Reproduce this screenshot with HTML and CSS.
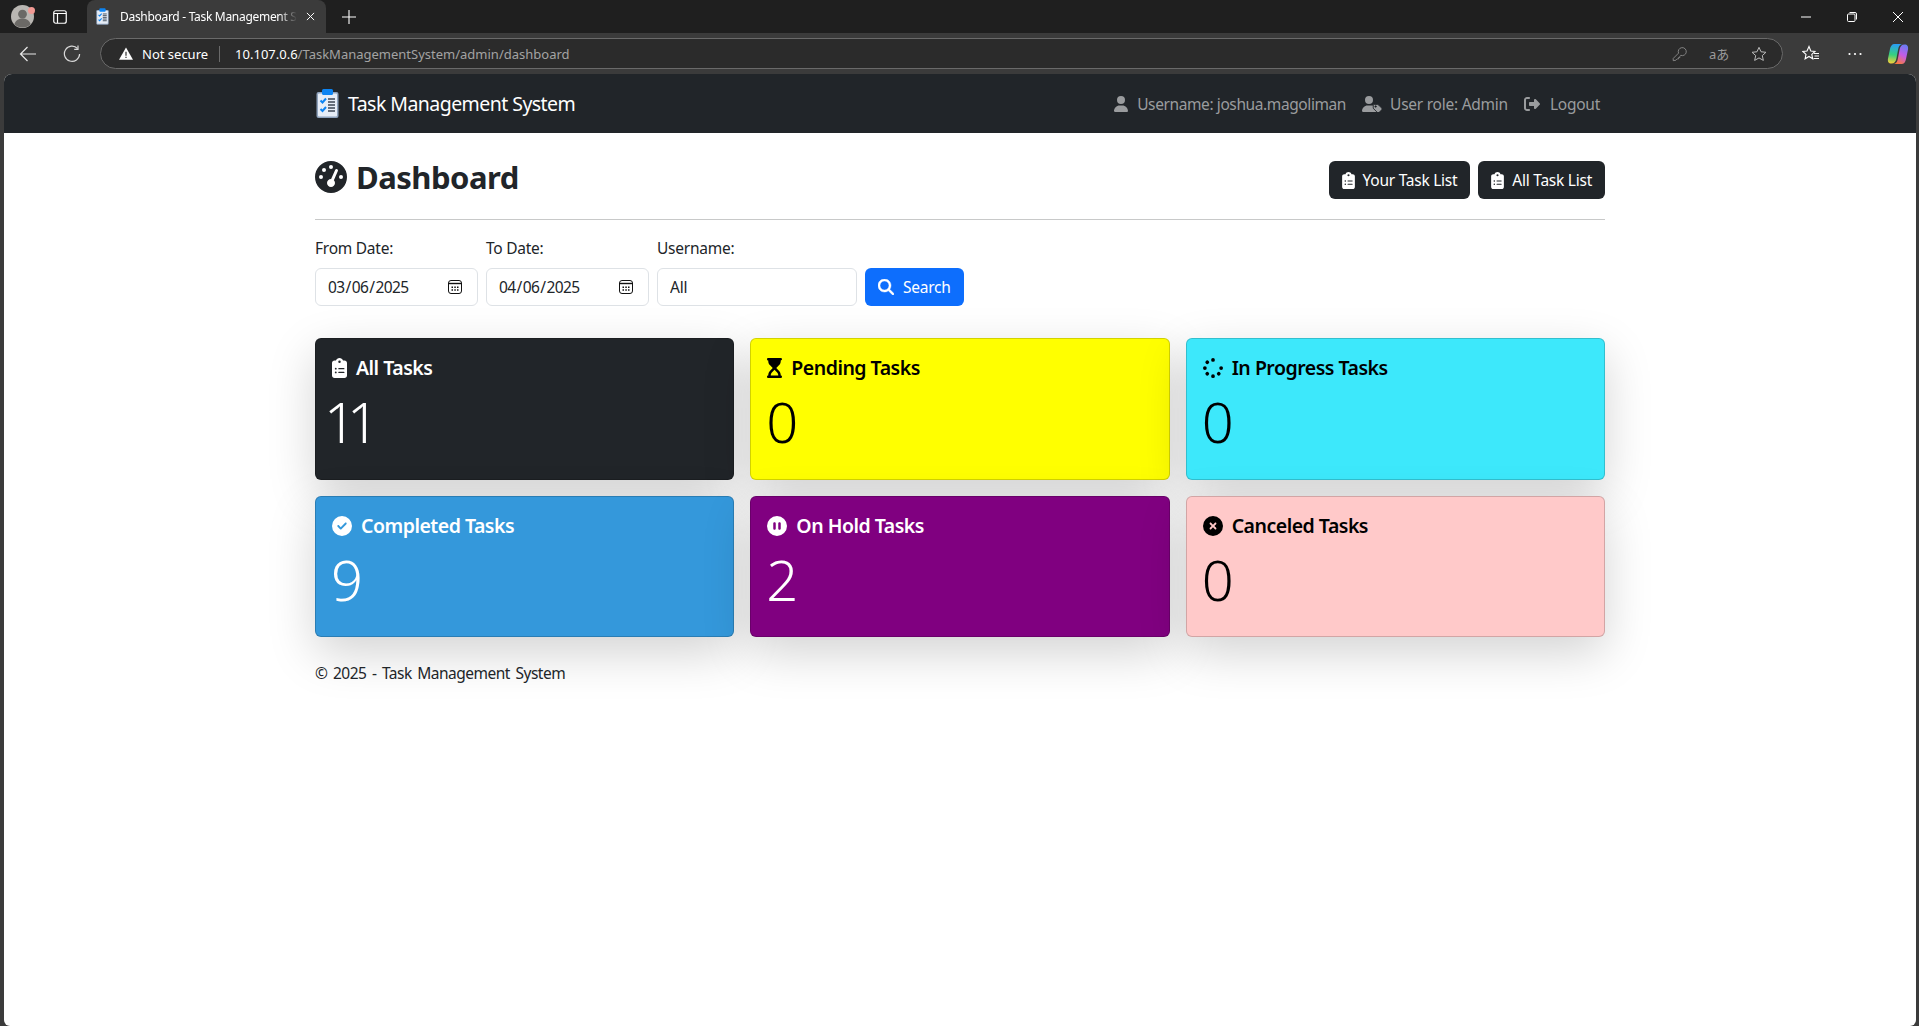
FILE: index.html
```html
<!DOCTYPE html>
<html lang="en">
  <head>
    <meta charset="UTF-8" />
    <meta name="viewport" content="width=device-width, initial-scale=1.0" />
    <title>Dashboard - Task Management System</title>
    <link rel="stylesheet" href="styles.css">
  </head>
  <body>
    <!-- Shared icons -->
    <svg class="sprite">
      <symbol id="icon-clipboard" viewBox="0 0 384 512">
        <path fill="currentColor" d="M192 0c-41.8 0-77.4 26.7-90.5 64H64C28.7 64 0 92.7 0 128V448c0 35.3 28.7 64 64 64H320c35.3 0 64-28.7 64-64V128c0-35.3-28.7-64-64-64H282.5C269.4 26.7 233.8 0 192 0zm0 64a32 32 0 1 1 0 64 32 32 0 1 1 0-64zM72 272a24 24 0 1 1 48 0 24 24 0 1 1 -48 0zm104-16H304c8.8 0 16 7.2 16 16s-7.2 16-16 16H176c-8.8 0-16-7.2-16-16s7.2-16 16-16zM72 368a24 24 0 1 1 48 0 24 24 0 1 1 -48 0zm88 0c0-8.8 7.2-16 16-16H304c8.8 0 16 7.2 16 16s-7.2 16-16 16H176c-8.8 0-16-7.2-16-16z" />
      </symbol>
      <symbol id="icon-logo" viewBox="0 0 23 29">
        <rect x="0.5" y="3" width="22" height="26" rx="2" fill="#8fa3bd" />
        <rect x="2" y="4.5" width="19" height="23" rx="1" fill="#e6edf7" />
        <rect x="6" y="0" width="11" height="6" rx="1.5" fill="#0d84f2" />
        <path d="M4.5 11.5l2 2 3.5-4M4.5 20l2 2 3.5-4" fill="none" stroke="#0d84f2" stroke-width="2" />
        <path d="M12 10h7M12 13h7M12 16h7M12 19h7M12 22h7" fill="none" stroke="#3c4654" stroke-width="1.6" />
      </symbol>
      <symbol id="icon-calendar" viewBox="0 0 14 14">
        <rect x="0.5" y="0.5" width="13" height="13" rx="2.5" fill="none" stroke="#111" />
        <path d="M1 3.500h12" stroke="#111" stroke-width="1.400" />
        <path d="M3.500 6.500h1.500v1.500h-1.500zM6.300 6.500h1.500v1.500h-1.500zM9 6.500h1.500v1.500h-1.500zM3.500 9.300h1.500v1.500h-1.500zM6.300 9.300h1.500v1.500h-1.500zM9 9.300h1.500v1.500h-1.500z" fill="#111" />
      </symbol>
    </svg>

    <!-- Browser tab strip -->
    <div class="tabstrip">
      <div class="avatar">
        <svg viewBox="0 0 24 24">
          <circle cx="12" cy="12" r="12" fill="#b9b6b2" />
          <circle cx="12" cy="9.5" r="4.6" fill="#6b6966" />
          <path d="M3.5 20c1.5-4.5 5-6 8.5-6s7 1.500 8.500 6a12 12 0 0 1-17 0z" fill="#6b6966" />
        </svg>
        <span class="avatar-dot"></span>
      </div>
      <svg class="strip-icon" viewBox="0 0 14 14">
        <rect x="0.75" y="0.75" width="12.5" height="12.5" rx="2" fill="none" stroke="#fff" stroke-width="1.2" />
        <path d="M1 3.500h12M4.500 3.500v9.500" fill="none" stroke="#fff" stroke-width="1.2" />
      </svg>
      <div class="tab">
        <svg class="tab-logo"><use href="#icon-logo" /></svg>
        <span class="tab-title">Dashboard - Task Management System</span>
        <svg class="tab-close" viewBox="0 0 10 10">
          <path d="M1 1l8 8M9 1l-8 8" stroke="#fff" stroke-width="1.1" />
        </svg>
      </div>
      <svg class="tab-new" viewBox="0 0 14 14">
        <path d="M7 0v14M0 7h14" stroke="#fff" stroke-width="1.1" />
      </svg>
      <div class="window-controls">
        <svg viewBox="0 0 10 10"><path d="M0 5h10" stroke="#fff" stroke-width="1" /></svg>
        <svg viewBox="0 0 10 10">
          <rect x="0.500" y="2" width="7.500" height="7.500" rx="1" fill="none" stroke="#fff" />
          <path d="M2.500 0.500h5.500a1.500 1.500 0 0 1 1.500 1.500v5.500" fill="none" stroke="#fff" />
        </svg>
        <svg viewBox="0 0 10 10"><path d="M0 0l10 10M10 0l-10 10" stroke="#fff" stroke-width="1" /></svg>
      </div>
    </div>

    <!-- Browser toolbar -->
    <div class="toolbar">
      <div class="tool-btn">
        <svg class="tool-icon" viewBox="0 0 18 18">
          <path d="M17 9H1.500M8.500 2L1.500 9l7 7" fill="none" stroke="#e8e8e8" stroke-width="1.2" />
        </svg>
      </div>
      <div class="tool-btn">
        <svg class="tool-icon" viewBox="0 0 18 18">
          <path d="M14.500 3.500A7.600 7.600 0 1 0 16.600 9" fill="none" stroke="#d8d8d8" stroke-width="1.2" />
          <path d="M15 0.500v3.800h-3.800" fill="none" stroke="#d8d8d8" stroke-width="1.2" />
        </svg>
      </div>
      <div class="address">
        <svg class="warn-icon" viewBox="0 0 16 14">
          <path d="M8 0L16 14H0z" fill="#fff" />
          <path d="M8 5v4.500M8 10.800v1.400" stroke="#333" stroke-width="1.400" />
        </svg>
        <span class="not-secure">Not secure</span>
        <span class="address-sep"></span>
        <span class="url"><span class="url-host">10.107.0.6</span>/TaskManagementSystem/admin/dashboard</span>
        <div class="address-actions">
          <div class="addr-btn">
            <svg viewBox="0 0 16 18">
              <path d="M1.500 16.500v-2.500l6-6a4.500 4.500 0 1 1 2.500 2.500l-1 1v1.500h-1.500v1.500h-1.500l-1.500 1.500z" fill="none" stroke="#8d8d8d" stroke-width="1" />
            </svg>
          </div>
          <div class="addr-btn"><span class="translate">aあ</span></div>
          <div class="addr-btn">
            <svg viewBox="0 0 18 18">
              <path d="M9 1.500l2.300 5 5.500 0.600-4.100 3.700 1.200 5.400L9 13.400l-4.900 2.800 1.200-5.400L1.200 7.100l5.500-0.600z" fill="none" stroke="#bdbdbd" stroke-width="1.100" />
            </svg>
          </div>
        </div>
      </div>
      <div class="tool-btn">
        <svg class="tool-icon" viewBox="0 0 18 18">
          <path d="M7 1.500l1.800 4.500 4.200 0.400-3.200 3 0.900 4.400L7 11.500l-3.900 2.300 0.900-4.400-3.200-3 4.200-0.400z" fill="none" stroke="#fff" stroke-width="1.100" />
          <path d="M12 8.500h5M12.500 11h4.500M11.500 13.500h5.500" stroke="#fff" stroke-width="1" />
        </svg>
      </div>
      <div class="tool-btn">
        <svg class="tool-icon" viewBox="0 0 18 18">
          <circle cx="3.500" cy="9" r="1.100" fill="#fff" />
          <circle cx="9" cy="9" r="1.100" fill="#fff" />
          <circle cx="14.500" cy="9" r="1.100" fill="#fff" />
        </svg>
      </div>
      <div class="tool-btn copilot-btn">
        <svg class="copilot" viewBox="0 0 22 22">
          <defs>
            <linearGradient id="cop-left" x1="0.400" y1="0" x2="0.300" y2="1">
              <stop offset="0" stop-color="#2a9df4" />
              <stop offset="0.550" stop-color="#35d07f" />
              <stop offset="1" stop-color="#f7d038" />
            </linearGradient>
            <linearGradient id="cop-right" x1="0.700" y1="0" x2="0.300" y2="1">
              <stop offset="0" stop-color="#6a7cf5" />
              <stop offset="0.500" stop-color="#c45be6" />
              <stop offset="1" stop-color="#fb7a3c" />
            </linearGradient>
          </defs>
          <path d="M7.500 1H15C12.500 1.500 11.500 4 11 7L9.500 15C9 18.500 7.500 20.500 4.500 20.500C1.500 20.500 .5 18.500 1 15.500L3 6C3.500 3 5 1 7.500 1z" fill="url(#cop-left)" />
          <path d="M14.500 21H7C9.500 20.500 10.500 18 11 15L12.500 7C13 3.500 14.500 1.500 17.500 1.500C20.500 1.500 21.500 3.500 21 6.500L19 16C18.500 19 17 21 14.500 21z" fill="url(#cop-right)" />
        </svg>
      </div>
    </div>

    <div class="page">
      <!-- Top navbar -->
      <nav class="navbar">
        <div class="container navbar-inner">
          <a class="brand">
            <svg class="brand-logo"><use href="#icon-logo" /></svg>
            <span>Task Management System</span>
          </a>
          <div class="nav-links">
            <a class="nav-link nav-user">
              <svg class="nav-icon" viewBox="0 0 448 512"><path fill="currentColor" d="M224 256A128 128 0 1 0 224 0a128 128 0 1 0 0 256zm-45.700 48C79.800 304 0 383.800 0 482.300C0 498.700 13.300 512 29.700 512H418.300c16.400 0 29.700-13.300 29.700-29.700C448 383.800 368.200 304 269.700 304H178.300z" /></svg>
              Username: joshua.magoliman
            </a>
            <a class="nav-link">
              <svg class="nav-icon-wide" viewBox="0 0 640 512">
                <path fill="currentColor" d="M224 256A128 128 0 1 0 224 0a128 128 0 1 0 0 256zm-45.700 48C79.800 304 0 383.800 0 482.300C0 498.700 13.300 512 29.700 512H470L350 392V304H178.300z" />
                <path fill="currentColor" fill-rule="evenodd" stroke="#212529" stroke-width="24" d="M392 272h100c14 0 26 5 36 15l100 100c15 15 15 40 0 55l-82 82c-15 15-40 15-55 0L376 409c-10-10-16-22-16-36V304c0-18 14-32 32-32zm44 40a24 24 0 1 0 0 48 24 24 0 1 0 0-48z" />
              </svg>
              User role: Admin
            </a>
            <a class="nav-link nav-logout">
              <svg class="nav-icon" viewBox="0 0 512 512"><path fill="currentColor" d="M377.900 105.900L500.700 228.700c7.200 7.200 11.300 17.100 11.300 27.300s-4.100 20.100-11.300 27.300L377.900 406.100c-6.400 6.400-15 9.900-24 9.900c-18.700 0-33.900-15.200-33.900-33.900l0-62.100-128 0c-17.700 0-32-14.300-32-32l0-64c0-17.700 14.300-32 32-32l128 0 0-62.100c0-18.700 15.200-33.900 33.900-33.900c9 0 17.600 3.600 24 9.900zM160 96L96 96c-17.700 0-32 14.300-32 32l0 256c0 17.700 14.300 32 32 32l64 0c17.700 0 32 14.300 32 32s-14.300 32-32 32l-64 0c-53 0-96-43-96-96L0 128C0 75 43 32 96 32l64 0c17.700 0 32 14.300 32 32s-14.300 32-32 32z" /></svg>
              Logout
            </a>
          </div>
        </div>
      </nav>

      <main class="container">
        <!-- Page heading -->
        <div class="page-head">
          <h2 class="page-title">
            <svg class="title-icon" viewBox="0 0 512 512"><path fill="currentColor" d="M0 256a256 256 0 1 1 512 0A256 256 0 1 1 0 256zM288 96a32 32 0 1 0 -64 0 32 32 0 1 0 64 0zM256 416c35.300 0 64-28.700 64-64c0-17.400-6.900-33.100-18.100-44.600L366 161.700c5.300-12.100-.2-26.300-12.300-31.600s-26.300 .2-31.600 12.300L257.900 288c-.6 0-1.300 0-1.900 0c-35.300 0-64 28.700-64 64s28.700 64 64 64zM176 144a32 32 0 1 0 -64 0 32 32 0 1 0 64 0zM96 288a32 32 0 1 0 0-64 32 32 0 1 0 0 64zm352-32a32 32 0 1 0 -64 0 32 32 0 1 0 64 0z" /></svg>
            Dashboard
          </h2>
          <div class="head-buttons">
            <button class="btn btn-dark"><svg class="btn-icon"><use href="#icon-clipboard" /></svg>Your Task List</button>
            <button class="btn btn-dark"><svg class="btn-icon"><use href="#icon-clipboard" /></svg>All Task List</button>
          </div>
        </div>
        <hr class="divider" />

        <!-- Filter form -->
        <form class="filters">
          <div class="field field-date">
            <label for="from-date">From Date:</label>
            <div class="date-wrap">
              <input type="date" id="from-date" value="2025-03-06" />
              <svg class="date-icon"><use href="#icon-calendar" /></svg>
            </div>
          </div>
          <div class="field field-date">
            <label for="to-date">To Date:</label>
            <div class="date-wrap">
              <input type="date" id="to-date" value="2025-04-06" />
              <svg class="date-icon"><use href="#icon-calendar" /></svg>
            </div>
          </div>
          <div class="field field-user">
            <label for="username">Username:</label>
            <input type="text" id="username" value="All" />
          </div>
          <button type="button" class="btn btn-search">
            <svg class="search-icon" viewBox="0 0 512 512"><path fill="currentColor" stroke="currentColor" stroke-width="14" d="M416 208c0 45.900-14.900 88.300-40 122.700L502.600 457.400c12.500 12.500 12.500 32.800 0 45.300s-32.800 12.500-45.300 0L330.700 376c-34.400 25.200-76.800 40-122.700 40C93.100 416 0 322.900 0 208S93.100 0 208 0S416 93.100 416 208zM208 352a144 144 0 1 0 0-288 144 144 0 1 0 0 288z" /></svg>
            Search
          </button>
        </form>

        <!-- Status cards -->
        <section class="cards">
          <div class="card card-all">
            <h5 class="card-title"><svg class="card-icon-clip"><use href="#icon-clipboard" /></svg>All Tasks</h5>
            <p class="card-count">11</p>
          </div>
          <div class="card card-pending">
            <h5 class="card-title">
              <svg class="card-icon-clip" viewBox="0 0 384 512"><path fill="currentColor" fill-rule="evenodd" d="M32 0C14.300 0 0 14.300 0 32S14.300 64 32 64V75c0 42.400 16.900 83.100 46.900 113.100L146.700 256 78.900 323.900C48.900 353.900 32 394.600 32 437v11c-17.700 0-32 14.300-32 32s14.300 32 32 32H352c17.700 0 32-14.300 32-32s-14.300-32-32-32V437c0-42.400-16.900-83.100-46.900-113.100L237.300 256l67.900-67.900c30-30 46.900-70.700 46.900-113.100V64c17.700 0 32-14.300 32-32s-14.300-32-32-32H32zM192 301.300l67.900 67.900C278 387 288 411 288 437v11H96V437c0-26 10-50 28.100-67.800L192 301.300z" /></svg>
              Pending Tasks
            </h5>
            <p class="card-count">0</p>
          </div>
          <div class="card card-progress">
            <h5 class="card-title">
              <svg class="card-icon-round" viewBox="0 0 512 512"><path fill="currentColor" d="M304 48a48 48 0 1 0 -96 0 48 48 0 1 0 96 0zm0 416a48 48 0 1 0 -96 0 48 48 0 1 0 96 0zM48 304a48 48 0 1 0 0-96 48 48 0 1 0 0 96zm464-48a48 48 0 1 0 -96 0 48 48 0 1 0 96 0zM142.900 437A48 48 0 1 0 75 369.100 48 48 0 1 0 142.900 437zm0-294.200A48 48 0 1 0 75 75a48 48 0 1 0 67.900 67.900zM369.100 437A48 48 0 1 0 437 369.100 48 48 0 1 0 369.100 437z" /></svg>
              In Progress Tasks
            </h5>
            <p class="card-count">0</p>
          </div>
          <div class="card card-completed">
            <h5 class="card-title">
              <svg class="card-icon-round" viewBox="0 0 512 512"><path fill="currentColor" d="M256 512A256 256 0 1 0 256 0a256 256 0 1 0 0 512zM369 209L241 337c-9.400 9.400-24.600 9.400-33.900 0l-64-64c-9.400-9.400-9.400-24.600 0-33.900s24.600-9.400 33.900 0l47 47L335 175c9.400-9.400 24.600-9.400 33.900 0s9.400 24.600 0 33.900z" /></svg>
              Completed Tasks
            </h5>
            <p class="card-count">9</p>
          </div>
          <div class="card card-hold">
            <h5 class="card-title">
              <svg class="card-icon-round" viewBox="0 0 512 512"><path fill="currentColor" d="M256 512A256 256 0 1 0 256 0a256 256 0 1 0 0 512zM224 192V320c0 17.700-14.300 32-32 32s-32-14.300-32-32V192c0-17.700 14.300-32 32-32s32 14.300 32 32zm128 0V320c0 17.700-14.300 32-32 32s-32-14.300-32-32V192c0-17.700 14.300-32 32-32s32 14.300 32 32z" /></svg>
              On Hold Tasks
            </h5>
            <p class="card-count">2</p>
          </div>
          <div class="card card-canceled">
            <h5 class="card-title">
              <svg class="card-icon-round" viewBox="0 0 512 512"><path fill="currentColor" d="M256 512A256 256 0 1 0 256 0a256 256 0 1 0 0 512zM175 175c9.400-9.400 24.600-9.400 33.900 0l47 47 47-47c9.400-9.400 24.600-9.400 33.900 0s9.400 24.600 0 33.900l-47 47 47 47c9.400 9.400 9.400 24.600 0 33.900s-24.600 9.400-33.900 0l-47-47-47 47c-9.400 9.400-24.600 9.400-33.900 0s-9.400-24.600 0-33.900l47-47-47-47c-9.400-9.400-9.400-24.600 0-33.900z" /></svg>
              Canceled Tasks
            </h5>
            <p class="card-count">0</p>
          </div>
        </section>

        <footer class="footer">&copy; 2025 - Task Management System</footer>
      </main>
    </div>
  </body>
</html>
```

FILE: styles.css
```css
/* Base */
html,
body {
  height: 100%;
}

body {
  margin: 0;
  display: flex;
  flex-direction: column;
  overflow: hidden;
  font-family: "Noto Sans", "Open Sans", sans-serif;
  font-size: 15.5px;
  color: #212529;
  background-color: #3b3b3b;
  letter-spacing: -0.25px;
}

.sprite {
  display: none;
}

/* Browser tab strip */
.tabstrip {
  height: 33px;
  flex: none;
  display: flex;
  align-items: center;
  background-color: #1f1f1f;
}

.avatar {
  position: relative;
  width: 23px;
  height: 23px;
  margin-left: 11px;
}

.avatar svg {
  display: block;
  width: 23px;
  height: 23px;
}

.avatar-dot {
  position: absolute;
  top: 2px;
  right: -1px;
  width: 7px;
  height: 7px;
  border-radius: 50%;
  background-color: #f29a94;
}

.strip-icon {
  width: 14px;
  height: 14px;
  margin-left: 19px;
}

.tab {
  width: 239px;
  height: 33px;
  margin-left: 20px;
  display: flex;
  align-items: center;
  box-sizing: border-box;
  padding-left: 9px;
  background-color: #3b3b3b;
  border-radius: 8px 8px 0 0;
  align-self: flex-end;
}

.tab-logo {
  width: 13px;
  height: 17px;
}

.tab-title {
  width: 177px;
  margin-left: 11px;
  font-size: 12px;
  color: #fff;
  white-space: nowrap;
  overflow: hidden;
  letter-spacing: -0.3px;
  -webkit-mask-image: linear-gradient(to right, #000 90%, transparent);
  mask-image: linear-gradient(to right, #000 90%, transparent);
}

.tab-close {
  width: 9px;
  height: 9px;
  margin-left: 9px;
}

.tab-new {
  width: 14px;
  height: 14px;
  margin-left: 16px;
}

.window-controls {
  margin-left: auto;
  display: flex;
  align-items: center;
  gap: 36px;
  padding-right: 16px;
}

.window-controls svg {
  width: 10px;
  height: 10px;
}

/* Browser toolbar */
.toolbar {
  height: 41px;
  flex: none;
  display: flex;
  align-items: flex-start;
  padding-left: 6px;
  padding-right: 1px;
  box-sizing: border-box;
  background-color: #3b3b3b;
}

.tool-btn {
  width: 44px;
  height: 36px;
  flex: none;
  display: flex;
  align-items: center;
  justify-content: center;
  margin-top: 3px;
}

.copilot-btn {
  width: 41px;
}

.tool-icon {
  width: 18px;
  height: 18px;
}

.copilot {
  width: 22px;
  height: 22px;
}

.address {
  flex: 1;
  height: 31px;
  margin: 5px 6px 0;
  padding-left: 18px;
  padding-right: 3px;
  display: flex;
  align-items: center;
  background-color: #2b2b2b;
  border: 1px solid #6a6a6a;
  border-radius: 16px;
  box-sizing: border-box;
}

.warn-icon {
  width: 14px;
  height: 13px;
}

.not-secure {
  margin-left: 9px;
  font-size: 13px;
  color: #fff;
  letter-spacing: 0;
}

.address-sep {
  width: 1px;
  height: 16px;
  margin-left: 11px;
  margin-right: 15px;
  background-color: #6a6a6a;
}

.url {
  font-size: 13px;
  color: #a3a3a3;
  letter-spacing: 0;
}

.url-host {
  color: #fff;
}

.address-actions {
  margin-left: auto;
  display: flex;
}

.addr-btn {
  width: 40px;
  display: flex;
  align-items: center;
  justify-content: center;
}

.addr-btn svg {
  width: 16px;
  height: 16px;
}

.translate {
  font-size: 13px;
  color: #9a9a9a;
  font-family: "Noto Sans", "Noto Sans CJK JP", sans-serif;
}

/* Page area */
.page {
  flex: 1;
  margin: 0 3px 0 4px;
  background-color: #fff;
  border-radius: 8px 8px 6px 6px;
  overflow: hidden;
}

.container {
  width: 1290px;
  margin: 0 auto;
}

/* Top navbar */
.navbar {
  height: 59px;
  background-color: #212529;
}

.navbar-inner {
  height: 100%;
  display: flex;
  align-items: center;
  justify-content: space-between;
}

.brand {
  display: flex;
  align-items: center;
  gap: 9px;
  margin-left: 1px;
  font-size: 19.5px;
  letter-spacing: -0.55px;
  color: #fff;
}

.brand-logo {
  width: 23px;
  height: 29px;
}

.nav-links {
  display: flex;
  align-items: center;
  gap: 16px;
  padding-right: 5px;
}

.nav-link {
  display: flex;
  align-items: center;
  gap: 8px;
  color: #9a9c9e;
}

.nav-user {
  letter-spacing: -0.4px;
}

.nav-logout {
  gap: 10px;
}

.nav-icon {
  width: 16px;
  height: 16px;
}

.nav-icon-wide {
  width: 20px;
  height: 16px;
}

/* Page heading */
.page-head {
  display: flex;
  justify-content: space-between;
  align-items: flex-start;
  padding-top: 28px;
}

.page-title {
  margin: 0;
  display: flex;
  align-items: center;
  gap: 9px;
  height: 32px;
  font-size: 31px;
  font-weight: 700;
  letter-spacing: -0.5px;
  line-height: 32px;
}

.title-icon {
  width: 32px;
  height: 32px;
}

.head-buttons {
  display: flex;
  gap: 8px;
}

.btn {
  height: 38px;
  display: flex;
  align-items: center;
  padding: 0 13px;
  font-family: inherit;
  font-size: 15.5px;
  letter-spacing: -0.25px;
  border: none;
  border-radius: 6px;
  cursor: pointer;
}

.btn-dark {
  gap: 8px;
  color: #fff;
  background-color: #212529;
}

.btn-icon {
  width: 13px;
  height: 17px;
  color: #fff;
}

.divider {
  margin: 20px 0 0;
  border: none;
  border-top: 1px solid #c8c9c9;
}

/* Filter form */
.filters {
  display: flex;
  align-items: flex-end;
  gap: 8px;
  margin-top: 16px;
}

.field {
  display: flex;
  flex-direction: column;
  gap: 8px;
}

.field label {
  line-height: 24px;
}

.field input {
  height: 38px;
  box-sizing: border-box;
  padding: 0 12px;
  font-family: inherit;
  font-size: 15.5px;
  letter-spacing: -0.25px;
  color: #212529;
  background-color: #fff;
  border: 1px solid #dee2e6;
  border-radius: 6px;
}

.date-wrap {
  position: relative;
}

.field-date input {
  display: block;
  width: 163px;
  padding-left: 11px;
  letter-spacing: -0.6px;
}

.field-date input::-webkit-calendar-picker-indicator {
  opacity: 0;
}

.date-icon {
  position: absolute;
  top: 12px;
  right: 16px;
  width: 14px;
  height: 14px;
  pointer-events: none;
}

.field-user input {
  width: 200px;
}

.btn-search {
  gap: 9px;
  color: #fff;
  background-color: #0d6efd;
}

.search-icon {
  width: 16px;
  height: 16px;
}

/* Status cards */
.cards {
  display: grid;
  grid-template-columns: repeat(3, 1fr);
  gap: 16px;
  margin-top: 32px;
}

.card {
  padding: 17px 16px 16px;
  border: 1px solid rgba(0, 0, 0, 0.175);
  border-radius: 6px;
  box-shadow: 0 16px 48px rgba(0, 0, 0, 0.175);
}

.card-title {
  margin: 0 0 8px;
  display: flex;
  align-items: center;
  gap: 9px;
  font-size: 19.5px;
  font-weight: 600;
  letter-spacing: -0.5px;
  line-height: 24px;
}

.card-icon-clip {
  width: 15px;
  height: 20px;
}

.card-icon-round {
  width: 20px;
  height: 20px;
}

.card-count {
  margin: 0 0 8px -1px;
  font-size: 56px;
  font-weight: 300;
  line-height: 66.5px;
  letter-spacing: 0;
}

.card-all .card-count {
  margin-left: -8px;
  letter-spacing: -9px;
}

.card-all {
  color: #fff;
  background-color: #212529;
}

.card-pending {
  color: #000;
  background-color: #ffff00;
}

.card-progress {
  color: #000;
  background-color: #3de8fb;
}

.card-completed {
  color: #fff;
  background-color: #3498db;
}

.card-hold {
  color: #fff;
  background-color: #800080;
}

.card-canceled {
  color: #000;
  background-color: #ffc9c9;
}

/* Footer */
.footer {
  margin-top: 24px;
  line-height: 24px;
  letter-spacing: -0.5px;
  word-spacing: 2px;
}
```
